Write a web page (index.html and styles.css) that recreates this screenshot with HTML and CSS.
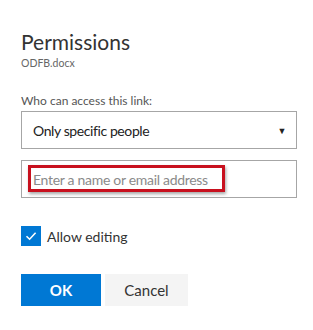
FILE: index.html
```html
<!DOCTYPE html>
<html lang="en">
<head>
    <meta charset="UTF-8">
    <meta name="viewport" content="width=device-width, initial-scale=1.0">
    <title>Permissions</title>
    <link rel="stylesheet" href="styles.css">
</head>
<body>
    <div class="dialog">
        <h2 class="title">Permissions</h2>
        <div class="file-name">ODFB.docx</div>

        <label class="field-label" for="access">Who can access this link:</label>
        <div class="select-box" id="access">
            <span>Only specific people</span>
            <span class="caret">&#9660;</span>
        </div>

        <div class="people-box">
            <span class="placeholder">Enter a name or email address</span>
            <div class="highlight"></div>
        </div>

        <div class="check-row">
            <span class="checkbox">
                <svg width="14" height="14" viewBox="0 0 14 14"><path d="M2.5 7.2 L5.6 10.2 L11.6 3.8" fill="none" stroke="#fff" stroke-width="1.6"/></svg>
            </span>
            <span class="check-label">Allow editing</span>
        </div>

        <div class="actions">
            <button class="btn btn-primary">OK</button>
            <button class="btn btn-default">Cancel</button>
        </div>
    </div>
</body>
</html>
```

FILE: styles.css
```css
:root {
    --primary-color: #0078d4;
    --border-color: #a6a6a6;
    --text-color: #333;
}
body {
    margin: 0;
    background-color: #fff;
    font-family: Lato, "Open Sans", sans-serif;
    color: var(--text-color);
}
.dialog { padding: 28px 16px 0 21px; width: 276px; }
.title { margin: 0; font-size: 21px; font-weight: 400; line-height: 28px; color: #333; }
.file-name { font-size: 10.5px; line-height: 14px; color: #666; }
.field-label { display: block; margin-top: 22px; margin-bottom: 1px; font-size: 12px; line-height: 18px; color: #555; }
.select-box {
    display: flex;
    align-items: center;
    justify-content: space-between;
    height: 38px;
    box-sizing: border-box;
    border: 1px solid var(--border-color);
    padding: 0 10px 0 11px;
    font-size: 14px;
    letter-spacing: -0.4px;
    color: #222;
}
.caret { font-size: 9px; color: #222; }
.people-box {
    position: relative;
    margin-top: 11px;
    height: 38px;
    box-sizing: border-box;
    border: 1px solid var(--border-color);
    padding: 0 11px;
    display: flex;
    align-items: center;
}
.placeholder { font-size: 14px; letter-spacing: -0.3px; color: #8a8a8a; }
.highlight {
    position: absolute;
    left: 6px;
    top: 4px;
    width: 191px;
    height: 21px;
    border: 3px solid #c8101e;
    box-shadow: 1px 2px 3px rgba(0,0,0,0.35);
}
.check-row { display: flex; align-items: center; gap: 6px; margin-top: 28px; }
.checkbox {
    width: 20px;
    height: 20px;
    background-color: var(--primary-color);
    display: flex;
    align-items: center;
    justify-content: center;
}
.check-label { font-size: 14px; color: #333; }
.actions { display: flex; gap: 4px; margin-top: 28px; }
.btn {
    height: 32px;
    border: none;
    font-family: inherit;
    font-size: 15px;
    padding: 0;
    cursor: pointer;
}
.btn-primary { width: 80px; background-color: var(--primary-color); color: #fff; font-weight: 700; }
.btn-default { width: 83px; background-color: #f4f4f4; color: #333; }
```
